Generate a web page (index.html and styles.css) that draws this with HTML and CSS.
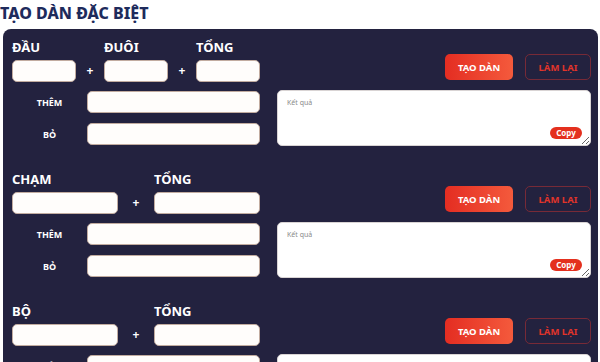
FILE: index.html
```html
<!DOCTYPE html>
<html lang="vi">
<head>
    <meta charset="UTF-8">
    <meta name="viewport" content="width=device-width, initial-scale=1.0">
    <title>Tạo dàn đặc biệt</title>
    <link rel="stylesheet" href="styles.css">
</head>
<body>
    <h1 class="page-title">TẠO DÀN ĐẶC BIỆT</h1>

    <div class="dan-panel">
        <!-- Đầu / Đuôi / Tổng -->
        <div class="dan-section">
            <div class="pick-row cols-3">
                <div class="field"><label>ĐẦU</label><input type="text"></div>
                <span class="plus">+</span>
                <div class="field"><label>ĐUÔI</label><input type="text"></div>
                <span class="plus">+</span>
                <div class="field"><label>TỔNG</label><input type="text"></div>
            </div>
            <div class="actions">
                <button class="btn-create">TẠO DÀN</button>
                <button class="btn-reset">LÀM LẠI</button>
            </div>
            <div class="extra">
                <div class="extra-row"><span>THÊM</span><input type="text"></div>
                <div class="extra-row"><span>BỎ</span><input type="text"></div>
            </div>
            <div class="result">
                <textarea placeholder="Kết quả"></textarea>
                <button class="btn-copy">Copy</button>
            </div>
        </div>

        <!-- Chạm / Tổng -->
        <div class="dan-section">
            <div class="pick-row cols-2">
                <div class="field"><label>CHẠM</label><input type="text"></div>
                <span class="plus">+</span>
                <div class="field"><label>TỔNG</label><input type="text"></div>
            </div>
            <div class="actions">
                <button class="btn-create">TẠO DÀN</button>
                <button class="btn-reset">LÀM LẠI</button>
            </div>
            <div class="extra">
                <div class="extra-row"><span>THÊM</span><input type="text"></div>
                <div class="extra-row"><span>BỎ</span><input type="text"></div>
            </div>
            <div class="result">
                <textarea placeholder="Kết quả"></textarea>
                <button class="btn-copy">Copy</button>
            </div>
        </div>

        <!-- Bộ / Tổng -->
        <div class="dan-section">
            <div class="pick-row cols-2">
                <div class="field"><label>BỘ</label><input type="text"></div>
                <span class="plus">+</span>
                <div class="field"><label>TỔNG</label><input type="text"></div>
            </div>
            <div class="actions">
                <button class="btn-create">TẠO DÀN</button>
                <button class="btn-reset">LÀM LẠI</button>
            </div>
            <div class="extra">
                <div class="extra-row"><span>THÊM</span><input type="text"></div>
                <div class="extra-row"><span>BỎ</span><input type="text"></div>
            </div>
            <div class="result">
                <textarea placeholder="Kết quả"></textarea>
                <button class="btn-copy">Copy</button>
            </div>
        </div>
    </div>
</body>
</html>
```

FILE: styles.css
```css
html, body {
    margin: 0;
    overflow: hidden;
}
body {
    font-family: "Noto Sans", "Liberation Sans", sans-serif;
    background: #fff;
}
.page-title {
    margin: 0;
    padding: 3px 0 0 0;
    height: 26px;
    font-size: 16px;
    line-height: 20px;
    font-weight: 800;
    color: #1e2b5c;
}
.dan-panel {
    margin-left: 3px;
    width: 595px;
    background: #23223f;
    border-radius: 8px 8px 0 0;
    padding: 0 6px 0 9px;
    box-sizing: border-box;
}
.dan-section {
    display: grid;
    grid-template-columns: 248px 314px;
    column-gap: 17px;
    row-gap: 9px;
    padding: 10px 0 15px 0;
}
.pick-row {
    display: grid;
    align-items: end;
}
.cols-3 {
    grid-template-columns: 64px 28px 64px 28px 64px;
}
.cols-2 {
    grid-template-columns: 106px 36px 106px;
}
.field label {
    display: block;
    color: #fff;
    font-size: 13px;
    line-height: 16px;
    font-weight: 700;
    margin-bottom: 5px;
}
input {
    display: block;
    width: 100%;
    height: 22px;
    box-sizing: border-box;
    border: 1px solid #c2aca0;
    border-radius: 5px;
    background: #fffdfb;
    margin: 0;
}
.plus {
    color: #fff;
    font-size: 12px;
    font-weight: 700;
    text-align: center;
    line-height: 22px;
}
.actions {
    display: flex;
    justify-content: flex-end;
    align-items: flex-end;
    gap: 12px;
    padding-bottom: 2px;
}
.actions button {
    height: 26px;
    border-radius: 5px;
    font-family: inherit;
    font-size: 9.5px;
    font-weight: 700;
    padding: 0;
    cursor: pointer;
}
.btn-create {
    width: 68px;
    border: none;
    color: #fff;
    background: linear-gradient(90deg, #e42d22, #f45a3c);
}
.btn-reset {
    width: 66px;
    border: 1px solid #772a37;
    color: #e0342a;
    background: transparent;
}
.extra {
    display: flex;
    flex-direction: column;
    gap: 10px;
}
.extra-row {
    display: flex;
    align-items: center;
}
.extra-row span {
    width: 75px;
    text-align: center;
    color: #fff;
    font-size: 9px;
    font-weight: 700;
}
.extra-row input {
    width: 173px;
}
.result {
    position: relative;
    height: 56px;
    margin-top: -1px;
}
.result textarea {
    display: block;
    width: 100%;
    height: 100%;
    box-sizing: border-box;
    border: 1px solid #d9d4d4;
    border-radius: 5px;
    background: #fff;
    padding: 7px 9px;
    font-family: inherit;
    font-size: 7px;
    margin: 0;
}
.result textarea::placeholder {
    color: #8a8a8a;
}
.btn-copy {
    position: absolute;
    right: 9px;
    bottom: 7px;
    width: 32px;
    height: 12px;
    padding: 0;
    border: none;
    border-radius: 6px;
    background: #e4301e;
    color: #fff;
    font-family: inherit;
    font-size: 8px;
    font-weight: 700;
    line-height: 12px;
}
```
